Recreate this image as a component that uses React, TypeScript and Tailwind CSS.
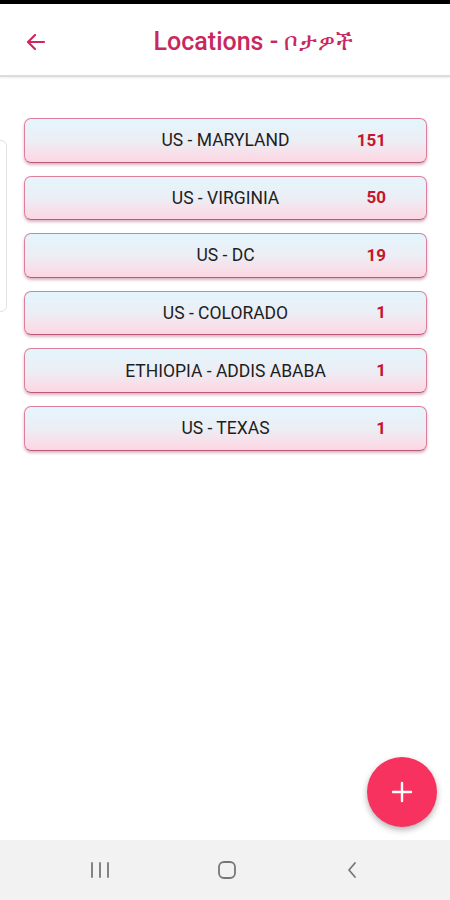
import React from "react";

const rows = [
  { name: "US - MARYLAND", count: 151 },
  { name: "US - VIRGINIA", count: 50 },
  { name: "US - DC", count: 19 },
  { name: "US - COLORADO", count: 1 },
  { name: "ETHIOPIA - ADDIS ABABA", count: 1 },
  { name: "US - TEXAS", count: 1 },
];

export default function App() {
  return (
    <div
      className="relative w-[450px] h-[900px] bg-white flex flex-col overflow-hidden"
      style={{ fontFamily: "Roboto, 'Noto Sans', 'DejaVu Sans', sans-serif" }}
    >
      <div className="h-[4px] bg-black shrink-0" />
      <header className="h-[73px] shrink-0 flex items-center pt-[4px] border-b-2 border-[#dcdcdc] shadow-[0_1px_2px_rgba(0,0,0,0.08)] relative">
        <div className="w-[70px] flex items-center pl-[24px]">
          <svg width="24" height="24" viewBox="0 0 24 24" fill="none" stroke="#d0275f" strokeWidth="2.2" strokeLinecap="round" strokeLinejoin="round">
            <path d="M20 12H4.5" />
            <path d="M11 5l-7 7 7 7" />
          </svg>
        </div>
        <div className="flex-1 flex justify-center pr-[12px]">
          <span className="text-[25px] font-medium text-[#c8285e] leading-none whitespace-nowrap">
            Locations - <span style={{ fontFamily: "'DejaVu Sans', 'Noto Sans', sans-serif" }} className="font-normal text-[24px] tracking-[1px]">ቦታዎች</span>
          </span>
        </div>
      </header>

      <div className="absolute left-[-10px] top-[140px] w-[17px] h-[172px] border border-[#e2e2e2] rounded-r-[6px] bg-white" />

      <main className="flex-1 flex flex-col gap-[13px] pt-[41px] pl-[24px] pr-[23px]">
        {rows.map((r) => (
          <div
            key={r.name}
            className="h-[44.6px] rounded-[7px] border border-[#dc7f9c] border-b-[#b8587a] bg-gradient-to-b from-[#e4f5fc] via-[#eceef5] to-[#fdd6e2] shadow-[0_2px_3px_rgba(150,40,80,0.35)] grid grid-cols-[80px_1fr_80px] items-center"
          >
            <div />
            <div className="text-center text-[17.5px] text-[#1e1e1e] whitespace-nowrap">{r.name}</div>
            <div className="text-right pr-[40px] text-[17px] font-bold text-[#c8152e]">{r.count}</div>
          </div>
        ))}
      </main>

      <button className="absolute right-[13px] bottom-[73px] w-[70px] h-[70px] rounded-full bg-[#f7325e] flex items-center justify-center shadow-[0_3px_6px_rgba(0,0,0,0.3)]">
        <svg width="22" height="22" viewBox="0 0 22 22" stroke="white" strokeWidth="2.4" strokeLinecap="round">
          <path d="M11 2v18M2 11h18" />
        </svg>
      </button>

      <nav className="h-[60px] shrink-0 bg-[#f2f2f2] grid grid-cols-3 items-center">
        <div className="flex justify-end pr-[40px]">
          <svg width="20" height="20" viewBox="0 0 20 20" stroke="#777" strokeWidth="1.8" strokeLinecap="round">
            <path d="M2 3v14M10 3v14M18 3v14" />
          </svg>
        </div>
        <div className="flex justify-center pl-[4px]">
          <svg width="20" height="20" viewBox="0 0 20 20" fill="none" stroke="#777" strokeWidth="1.8">
            <rect x="2" y="2" width="16" height="16" rx="5" />
          </svg>
        </div>
        <div className="flex justify-start pl-[46px]">
          <svg width="12" height="20" viewBox="0 0 12 20" fill="none" stroke="#777" strokeWidth="1.8" strokeLinecap="round" strokeLinejoin="round">
            <path d="M9 3L3 10l6 7" />
          </svg>
        </div>
      </nav>
    </div>
  );
}
